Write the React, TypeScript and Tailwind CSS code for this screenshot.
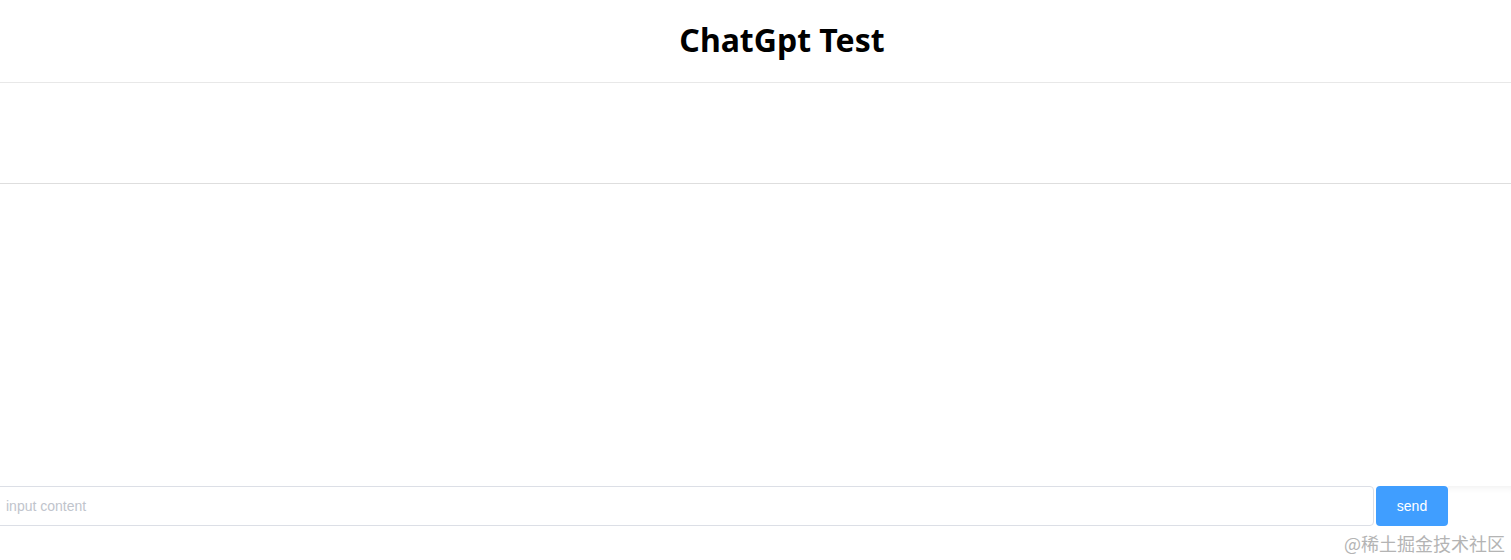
import React from "react";

export default function App() {
  return (
    <div className="relative w-[1511px] h-[560px] bg-white overflow-hidden" style={{ fontFamily: '"Liberation Sans", Arial, sans-serif' }}>
      <header className="h-[83px] flex items-center justify-center pl-[53px] shadow-[0_1px_6px_rgba(0,0,0,0.05)] border-b border-[#e8e8e8]">
        <h1 className="text-[32px] font-bold text-black leading-none pb-[2px]" style={{ fontFamily: '"Noto Sans", "Open Sans", sans-serif' }}>
          ChatGpt Test
        </h1>
      </header>
      <section className="h-[101px] bg-white border-b border-[#dedede] shadow-[0_2px_3px_rgba(0,0,0,0.06)]" />
      <main className="h-[302px] bg-white" />
      <div className="flex h-[40px] w-[1511px]">
        <div className="w-[1376px] overflow-hidden">
          <input
            className="w-[1384px] h-full border border-[#dcdfe6] rounded-[4px] px-[15px] text-[14px] text-[#606266] placeholder:text-[#c0c4cc] outline-none -ml-[10px]"
            placeholder="input content"
          />
        </div>
        <button className="w-[72px] h-[40px] bg-[#409eff] text-white text-[14px] rounded-[4px]">send</button>
        <div className="flex-1 bg-white shadow-[inset_0_6px_6px_-4px_rgba(0,0,0,0.06)]" />
      </div>
      <div
        className="absolute right-[6px] bottom-[3px] text-[18px] text-[#b4b4b4]"
        style={{ fontFamily: '"Noto Sans CJK SC", "Liberation Serif", serif' }}
      >
        @稀土掘金技术社区
      </div>
    </div>
  );
}
